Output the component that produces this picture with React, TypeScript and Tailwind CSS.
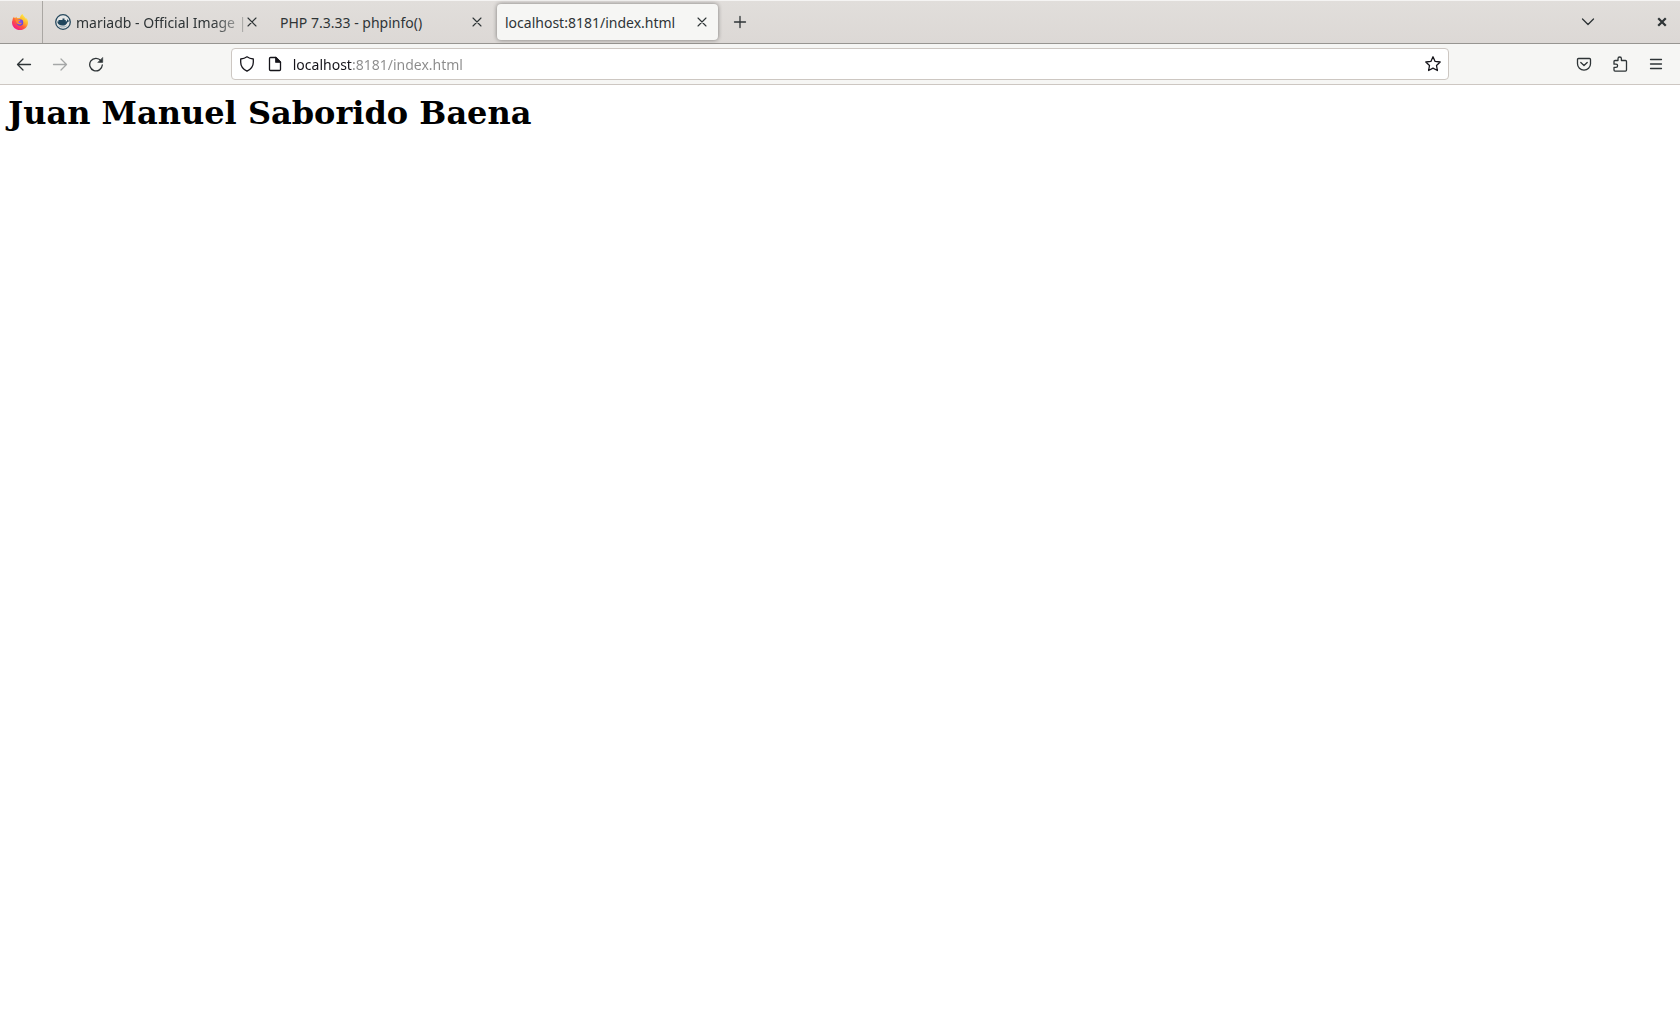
import React, { useState } from "react";

function Icon({ children, className = "" }: { children: React.ReactNode; className?: string }) {
  return (
    <svg
      viewBox="0 0 16 16"
      aria-hidden="true"
      className={`size-4 shrink-0 ${className}`}
      fill="none"
      stroke="currentColor"
      strokeWidth="1.3"
      strokeLinecap="round"
      strokeLinejoin="round"
    >
      {children}
    </svg>
  );
}

function FirefoxLogo() {
  return (
    <svg viewBox="0 0 16 16" className="size-4" role="img" aria-label="Firefox">
      <defs>
        <linearGradient id="flame" x1="0.85" y1="0.1" x2="0.2" y2="0.95">
          <stop offset="0" stopColor="#fff04a" />
          <stop offset="0.35" stopColor="#ffb32c" />
          <stop offset="0.62" stopColor="#ff5a3c" />
          <stop offset="1" stopColor="#f3158e" />
        </linearGradient>
        <radialGradient id="globe" cx="0.4" cy="0.4" r="0.7">
          <stop offset="0" stopColor="#9059ff" />
          <stop offset="1" stopColor="#5b3fd6" />
        </radialGradient>
      </defs>
      <path
        d="M15.6 6.2c-.3-.9-1-1.800-1.600-2.100.3.600.500 1.300.5 1.700-.8-2-2.200-2.800-3.300-4.500L10.500 0C8.800 1 8.200 2.700 8.100 3.700c-.8 0-1.600.3-2.200.6-1-.3-1.500-1.100-1.600-1.600-.6.400-1 1.100-1.100 1.600-.7-.2-1-.9-1.100-1.500C1.100 3.700.6 5 .5 6.200.1 7 0 8 0 8.400 0 12.600 3.600 16 8 16s8-3.400 8-7.600c0-.8-.2-1.600-.4-2.200z"
        fill="url(#flame)"
      />
      <circle cx="7.900" cy="8.500" r="3.300" fill="url(#globe)" />
      <path d="M2.800 5.600c1.300-.7 2.600-.4 3.300.2.900 0 2 0 2.100.4-.1.700-1.300.9-1.700 1.200-.2.800.3 1.500 1.200 1.700.9.100 1.400-.6 2.200-.3-.4 1.100-1.500 1.600-2.700 1.500C4.900 10 3.900 8.200 4 6.900z" fill="#ff8a30" />
    </svg>
  );
}

function DockerLogo() {
  return (
    <svg viewBox="0 0 16 16" className="size-4 shrink-0" aria-hidden="true">
      <circle cx="8" cy="8" r="7.300" fill="#e4e6e6" stroke="#27495e" strokeWidth="1.300" />
      <path
        d="M2.200 7.600h1.300V6h4V4.400h2V6h1.300v1.500c.6 0 1-.2 1.300-.5-.3-.6-.2-1.200.2-1.700.5.300.8.700.9 1.200.5-.1 1 0 1.300.3-.4.800-1.100 1.100-1.900 1.100-.8 2.400-2.500 3.700-5.200 3.700-2.900 0-4.900-1.100-5.200-4z"
        fill="#20465d"
      />
      <path d="M3.300 11.500c1.100 1.400 2.700 2.100 4.500 2.100s3.400-.7 4.500-2.100c-2 1-6.500 1.100-9 0z" fill="#a9b4ba" />
    </svg>
  );
}

const CloseIcon = () => (
  <Icon><path d="M4 4l8 8M12 4l-8 8" strokeWidth="1.100" /></Icon>
);

type TabProps = { title: string; active?: boolean; fade?: boolean; favicon?: React.ReactNode };

function Tab({ title, active = false, fade = false, favicon }: TabProps) {
  return (
    <div
      className={`flex h-9 w-[221px] items-center rounded pl-2 pr-1 ${
        active ? "bg-[#f6f6f4] shadow-[0_0_4px_rgba(0,0,0,0.45)]" : ""
      }`}
    >
      {favicon && <span className="mr-[5px]">{favicon}</span>}
      <button
        type="button"
        role="tab"
        aria-selected={active}
        className={`min-w-0 flex-1 whitespace-nowrap pt-0.5 text-left ${
          fade ? "-mr-2 [mask-image:linear-gradient(to_left,rgba(0,0,0,0.3)_8px,black_36px)]" : ""
        }`}
      >
        {title}
      </button>
      <button type="button" aria-label={`Close ${title}`} className="flex size-6 shrink-0 items-center justify-center">
        <CloseIcon />
      </button>
    </div>
  );
}

function ToolButton({ label, disabled, children }: { label: string; disabled?: boolean; children: React.ReactNode }) {
  return (
    <button
      type="button"
      aria-label={label}
      disabled={disabled}
      className="flex h-8 w-9 shrink-0 items-center justify-center disabled:opacity-40"
    >
      {children}
    </button>
  );
}

export default function App() {
  const [url, setUrl] = useState("localhost:8181/index.html");

  return (
    <div className="min-h-screen bg-white font-['Noto_Sans','Open_Sans',sans-serif] text-[#2e3436]">
      <header>
        <div className="flex h-11 items-center border-b border-t border-b-[#979591] border-t-[#f5f4f3] bg-linear-to-b from-[#e1dedb] to-[#dcd8d5] text-sm leading-5">
          <div className="flex w-[43px] items-center justify-center self-stretch border-r border-[#aaa7a3] pr-0.5">
            <FirefoxLogo />
          </div>
          <div role="tablist" className="flex gap-1 pl-1">
            <Tab title="mariadb - Official Image |" favicon={<DockerLogo />} fade />
            <Tab title="PHP 7.3.33 - phpinfo()" />
            <Tab title="localhost:8181/index.html" active />
          </div>
          <div className="pl-1">
            <ToolButton label="Open a new tab">
              <Icon><path d="M8 2.500v11M2.500 8h11" /></Icon>
            </ToolButton>
          </div>
          <div className="ml-auto flex items-center gap-[38px]">
            <ToolButton label="List all tabs">
              <Icon><path d="M2.500 5L8 10.500 13.500 5" /></Icon>
            </ToolButton>
            <ToolButton label="Close window">
              <Icon><path d="M5 5l6 6M11 5l-6 6" strokeWidth="2.200" strokeLinecap="square" /></Icon>
            </ToolButton>
          </div>
        </div>

        <div className="flex h-[41px] items-center border-b border-[#cdc7c2] bg-[#f6f6f4] px-1.5">
          <ToolButton label="Back">
            <Icon><path d="M14.500 8.500h-13M7 3L1.500 8.500 7 14" /></Icon>
          </ToolButton>
          <ToolButton label="Forward" disabled>
            <Icon><path d="M1.500 8.500h13M9 3l5.500 5.500L9 14" /></Icon>
          </ToolButton>
          <ToolButton label="Reload">
            <Icon>
              <path d="M12.900 4.600A6.300 6.300 0 1 0 14.300 9" />
              <path d="M14.700 1.800v4.600h-4.600z" fill="currentColor" strokeWidth="0.600" />
            </Icon>
          </ToolButton>
          <div className="w-[7%]" />
          <div className="flex h-8 min-w-0 flex-1 items-center rounded border border-[#cdc7c2] bg-white px-[7px] text-[#15141a]">
            <button type="button" aria-label="Tracking protection">
              <Icon><path d="M8 .8c1.700 1.300 4 2 6.300 2.200v3.200c0 4-2.500 7-6.300 9-3.800-2-6.300-5-6.300-9V3C4 2.800 6.300 2.100 8 .8z" /></Icon>
            </button>
            <button type="button" aria-label="Site information" className="ml-3">
              <Icon>
                <path d="M3.500 1.500h5.300l4.700 4.700v7.300a1 1 0 0 1-1 1h-9a1 1 0 0 1-1-1v-11a1 1 0 0 1 1-1z" />
                <path d="M8.800 1.500v4.700h4.700z" fill="currentColor" />
              </Icon>
            </button>
            <input
              aria-label="Address"
              value={url}
              onChange={(e) => setUrl(e.target.value)}
              spellCheck={false}
              className="ml-2.5 min-w-0 flex-1 bg-[linear-gradient(to_right,#15141a_59px,#8b8b8b_59px)] bg-clip-text pt-0.5 text-sm leading-6 text-transparent caret-black outline-none"
            />
            <button type="button" aria-label="Bookmark this page">
              <Icon><path d="M8 .8l2.100 4.600 5.100.6-3.700 3.500.9 5-4.400-2.400-4.400 2.400.9-5L.8 6l5.100-.6z" /></Icon>
            </button>
          </div>
          <div className="w-[7%]" />
          <ToolButton label="Save to Pocket">
            <Icon>
              <path d="M2.500 2.500h11a1 1 0 0 1 1 1v4.200a6.500 6.500 0 0 1-13 0V3.500a1 1 0 0 1 1-1z" />
              <path d="M4.800 6.500L8 9.500l3.200-3" />
            </Icon>
          </ToolButton>
          <ToolButton label="Extensions">
            <Icon>
              <path d="M3 4.500h3V2.700a1.700 1.700 0 0 1 3.400 0v1.800h4.100a1 1 0 0 1 1 1v8.600a1 1 0 0 1-1 1H3a1 1 0 0 1-1-1v-2.700h2a1.600 1.600 0 0 0 0-3.200H2V5.500a1 1 0 0 1 1-1z" />
            </Icon>
          </ToolButton>
          <ToolButton label="Open application menu">
            <Icon><path d="M2.500 3.500h11M2.500 8h11M2.500 12.500h11" /></Icon>
          </ToolButton>
        </div>
      </header>

      <main className="px-2 pt-2 font-['DejaVu_Serif',serif] text-black">
        <h1 className="text-[32px] font-bold leading-10">Juan Manuel Saborido Baena</h1>
      </main>
    </div>
  );
}
